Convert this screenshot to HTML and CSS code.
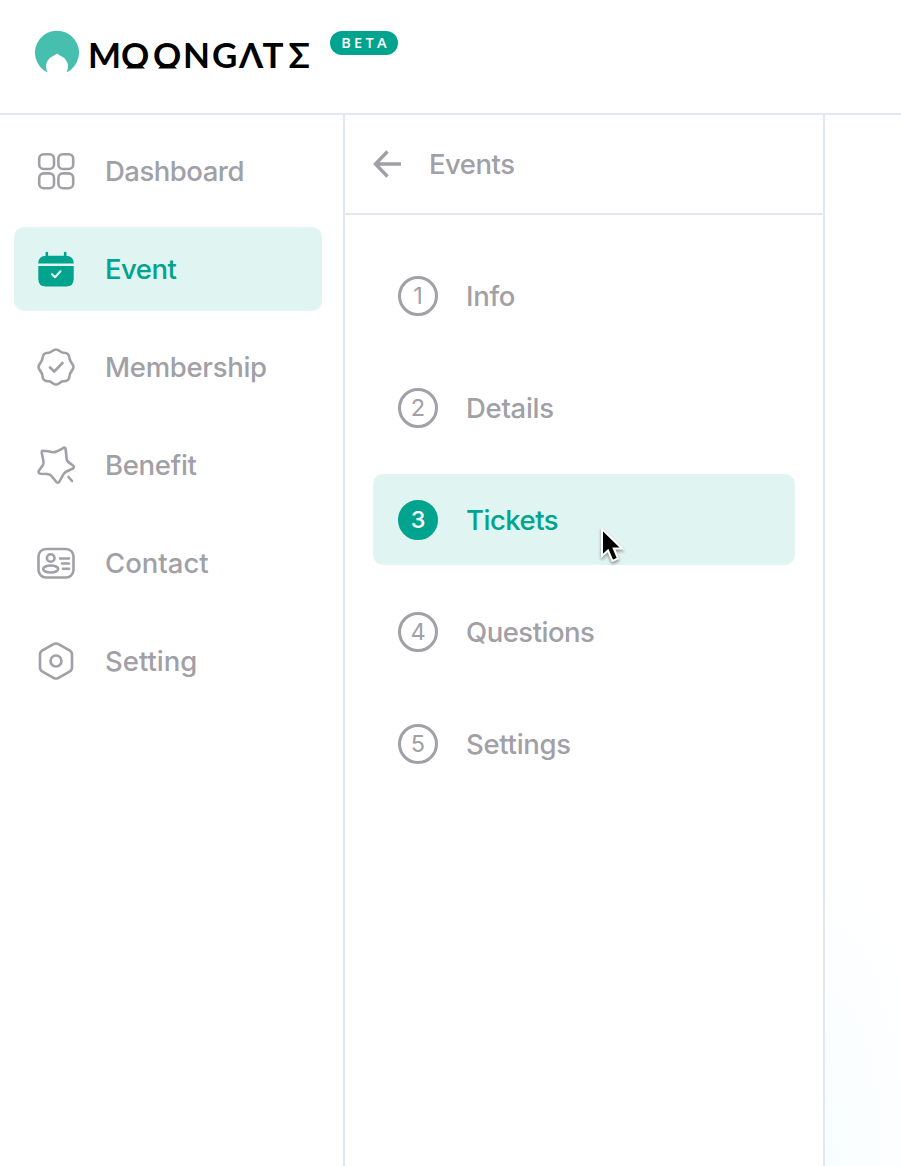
FILE: index.html
```html
<!DOCTYPE html>
<html lang="en">
<head>
<meta charset="utf-8">
<title>Moongate</title>
<link rel="stylesheet" href="styles.css">
</head>
<body>
<header class="topbar">
  <svg class="brand" width="292" height="50" viewBox="0 0 292 50" role="img" aria-label="Moongate">
    <path class="moon" d="M12.500 42.500A22 22 0 1 1 31.500 42.500Q34.500 36 31.500 31Q29 27 25 25.500L22 23.500L19 25.500Q15 27 12.500 31Q9.500 36 12.500 42.500Z"/>
    <text class="wordmark" y="38" x="53 86 118 148 177 204 227.500 253.500">MOONGΛTΣ</text>
    <path class="serifs" d="M94 35.500h13l3 3H91zM126 35.500h13l3 3h-19z"/>
  </svg>
  <span class="beta">BETA</span>
</header>
<div class="shell">
  <nav class="sidebar">
    <a class="nav-item">
      <svg class="icon" viewBox="0 0 40 40"><rect x="3.200" y="3.200" width="14.800" height="14.800" rx="4.500"/><rect x="22.400" y="3.200" width="14.800" height="14.800" rx="4.500"/><rect x="3.200" y="22.400" width="14.800" height="14.800" rx="4.500"/><rect x="22.400" y="22.400" width="14.800" height="14.800" rx="4.500"/></svg>
      <span class="tight">Dashboard</span>
    </a>
    <a class="nav-item active">
      <svg class="icon" viewBox="0 0 40 40"><path class="solid" d="M2.300 14.500C2.300 9.500 5 7 9.500 7V4a1.300 1.300 0 0 1 2.600 0v2.800h15.800V4a1.300 1.300 0 0 1 2.600 0v3C35 7 37.700 9.500 37.700 14.500zM2.300 17h35.400V30q0 7.500-7.500 7.500H9.800Q2.300 37.500 2.300 30z"/><path class="tick" d="M16 25.200l3 3 5.500-6"/></svg>
      <span class="tight">Event</span>
    </a>
    <a class="nav-item">
      <svg class="icon" viewBox="0 0 40 40"><path d="M20 2.500C23 2.500 24 5.500 27 5.700C31 5.500 33.500 7 33.700 12C34.200 15.500 37.500 17 37.500 20S34.200 24.500 33.700 28C33.500 33 31 34.500 27 34.300C24 34.500 23 37.500 20 37.500S16 34.500 13 34.300C9 34.500 6.500 33 6.300 28C5.800 24.500 2.500 23 2.500 20S5.800 15.500 6.300 12C6.500 7 9 5.500 13 5.700C16 5.500 17 2.500 20 2.500Z"/><path d="M14 20.500l4.200 4L26.500 16"/></svg>
      <span class="snug">Membership</span>
    </a>
    <a class="nav-item">
      <svg class="icon" viewBox="0 0 40 40"><path d="M7 5.800Q12 6 17 7.300Q20 7.300 27.500 2.800Q29.500 2 29.600 4.500Q30.500 11 30.700 14.500Q31.500 17 37 20.500Q39 22 37 23.500L30.500 26.500Q27.500 28 26.500 31L23.500 36.500Q21.700 39 20 36.500L15.500 31Q14 29.200 11 29L4.500 28.700Q1.500 28 3 25.500L7 20Q8 18.500 7.300 15.500L5.800 8Q5.500 5.500 7 5.800Z"/><path d="M32.500 32l3.500 4"/></svg>
      <span class="snug">Benefit</span>
    </a>
    <a class="nav-item">
      <svg class="icon" viewBox="0 0 40 40"><rect x="2.500" y="6" width="35" height="28.500" rx="7.500"/><circle cx="14.700" cy="15" r="3.800"/><ellipse cx="14.700" cy="26" rx="7.500" ry="3.500"/><path d="M24 15.500h9M26 20.500h7M27 25.800h6"/></svg>
      <span>Contact</span>
    </a>
    <a class="nav-item">
      <svg class="icon" viewBox="0 0 40 40"><path d="M17.500 3.200Q20 1.800 22.500 3.200L33.500 9.300Q36 10.800 36 13.500V26.500Q36 29.200 33.500 30.700L22.500 36.800Q20 38.200 17.500 36.800L6.500 30.700Q4 29.200 4 26.500V13.500Q4 10.800 6.500 9.300Z"/><circle cx="20" cy="20" r="5.500"/></svg>
      <span>Setting</span>
    </a>
  </nav>
  <section class="panel">
    <div class="panel-head">
      <svg class="back" viewBox="0 0 30 30"><path d="M29 15H4M15.500 2.500L3.500 15L15.500 27.500"/></svg>
      <span class="tight">Events</span>
    </div>
    <div class="steps">
      <a class="step"><span class="num">1</span><span class="snug">Info</span></a>
      <a class="step"><span class="num">2</span><span class="snug">Details</span></a>
      <a class="step active"><span class="num">3</span><span class="tight">Tickets</span>
        <svg class="cursor" viewBox="0 0 28 40"><path d="M4 3V30L10 24.500L14.500 35L20 32.500L15.800 22.500H24Z"/></svg>
      </a>
      <a class="step"><span class="num">4</span><span class="tight">Questions</span></a>
      <a class="step"><span class="num">5</span><span class="snug">Settings</span></a>
    </div>
  </section>
  <main class="content"></main>
</div>
</body>
</html>
```
FILE: styles.css
```css
* { box-sizing: border-box; }
body {
  margin: 0;
  height: 1166px;
  display: flex;
  flex-direction: column;
  overflow: hidden;
  background: #fff;
  color: #a1a0a7;
  font: 500 27.500px/36px Inter, "Liberation Sans", sans-serif;
}
.topbar {
  flex: none;
  height: 115px;
  padding: 30px 0 0 35px;
  display: flex;
  align-items: flex-start;
  gap: 3px;
  border-bottom: 2px solid #e2e8f0;
}
.brand { flex: none; }
.moon { fill: #47bfaf; }
.wordmark { font: 700 35px Lato, sans-serif; fill: #000; }
.serifs { fill: #000; }
.beta {
  width: 68px;
  height: 24px;
  margin-top: 1px;
  border-radius: 12px;
  background: #00a38d;
  color: #fff;
  font: 600 14.500px/24px "Open Sans", sans-serif;
  letter-spacing: 3.300px;
  text-indent: 3px;
  text-align: center;
}
.tight { letter-spacing: -.5px; }
.snug { letter-spacing: -.3px; }
.shell { flex: 1; display: flex; }
.sidebar {
  width: 345px;
  padding: 14px 21px 0 14px;
  display: flex;
  flex-direction: column;
  gap: 14px;
  border-right: 2px solid #e2e8f0;
}
.nav-item {
  height: 84px;
  padding-left: 22px;
  display: flex;
  align-items: center;
  gap: 29px;
  border-radius: 10px;
}
.active { background: #e0f4f1; color: #00a38d; }
.icon {
  flex: none;
  width: 40px;
  height: 40px;
  fill: none;
  stroke: currentColor;
  stroke-width: 2.600;
  stroke-linecap: round;
  stroke-linejoin: round;
}
.icon .solid { fill: currentColor; stroke: none; }
.icon .tick { stroke: #e0f4f1; stroke-width: 2.200; }
.panel { width: 480px; border-right: 2px solid #e2e8f0; }
.panel-head {
  height: 100px;
  padding-left: 27px;
  display: flex;
  align-items: center;
  gap: 27px;
  border-bottom: 2px solid #e2e8f0;
}
.back { width: 30px; height: 30px; fill: none; stroke: currentColor; stroke-width: 3.500; }
.steps {
  padding: 35px 28px 0;
  display: flex;
  flex-direction: column;
  gap: 21px;
}
.step {
  position: relative;
  height: 91px;
  padding-left: 25px;
  display: flex;
  align-items: center;
  gap: 28px;
  border-radius: 10px;
}
.num {
  width: 40px;
  height: 40px;
  border: 3px solid currentColor;
  border-radius: 50%;
  font-size: 23.500px;
  font-weight: 400;
  line-height: 34px;
  text-align: center;
}
.active .num { background: #00a38d; border-color: #00a38d; color: #fff; font-weight: 500; }
.cursor {
  position: absolute;
  left: 225px;
  top: 52px;
  width: 28px;
  height: 40px;
  fill: #000;
  stroke: #fff;
  stroke-width: 2;
  filter: drop-shadow(0 2px 1.500px rgba(0, 0, 0, .4));
}
.content {
  flex: 1;
  background: radial-gradient(ellipse 100px 310px at 0 100%, #f7fdff, #fff);
}
```
